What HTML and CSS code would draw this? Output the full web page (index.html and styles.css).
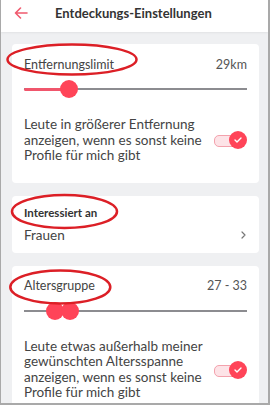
FILE: index.html
```html
<!DOCTYPE html>
<html lang="de">
<head>
<meta charset="utf-8">
<link rel="stylesheet" href="styles.css">
</head>
<body>
<div class="frame">
  <header class="topbar">
    <svg class="back" width="14" height="12" viewBox="0 0 14 12"><path d="M13 6H1.5M6.5 1L1.5 6l5 5" fill="none" stroke="#f05a6e" stroke-width="1.6" stroke-linecap="round" stroke-linejoin="round"/></svg>
    <h1 class="title">Entdeckungs-Einstellungen</h1>
  </header>
  <main class="content">
    <section class="card">
      <div class="row-head">
        <span class="label">Entfernungslimit</span>
        <span class="value">29km</span>
      </div>
      <div class="slider">
        <div class="track"></div>
        <div class="fill" style="width:45px"></div>
        <div class="knob" style="left:36px"></div>
      </div>
      <div class="toggle-row">
        <p class="desc">Leute in größerer Entfernung<br>anzeigen, wenn es sonst keine<br>Profile für mich gibt</p>
        <div class="toggle"><span class="tknob"><svg width="8" height="6" viewBox="0 0 8 6"><path d="M1 3l2 2 4-4" fill="none" stroke="#fff" stroke-width="1.4" stroke-linecap="round" stroke-linejoin="round"/></svg></span></div>
      </div>
    </section>
    <section class="card card-small">
      <div class="sub">Interessiert an</div>
      <div class="nav-row">
        <span class="navtext">Frauen</span>
        <svg width="5" height="8" viewBox="0 0 5 8"><path d="M1 1l3 3-3 3" fill="none" stroke="#777" stroke-width="1.2" stroke-linecap="round" stroke-linejoin="round"/></svg>
      </div>
    </section>
    <section class="card">
      <div class="row-head">
        <span class="label">Altersgruppe</span>
        <span class="value">27 - 33</span>
      </div>
      <div class="slider">
        <div class="track"></div>
        <div class="knob" style="left:22px"></div>
        <div class="knob" style="left:37px"></div>
      </div>
      <div class="toggle-row">
        <p class="desc">Leute etwas außerhalb meiner<br>gewünschten Altersspanne<br>anzeigen, wenn es sonst keine<br>Profile für mich gibt</p>
        <div class="toggle"><span class="tknob"><svg width="8" height="6" viewBox="0 0 8 6"><path d="M1 3l2 2 4-4" fill="none" stroke="#fff" stroke-width="1.4" stroke-linecap="round" stroke-linejoin="round"/></svg></span></div>
      </div>
    </section>
  </main>
  <svg class="marks" width="270" height="405" viewBox="0 0 270 405">
    <ellipse cx="72" cy="59.5" rx="64.5" ry="15" />
    <ellipse cx="64.5" cy="211.5" rx="52.5" ry="16.5" />
    <ellipse cx="60.3" cy="287" rx="50" ry="16.5" />
  </svg>
</div>
</body>
</html>
```
FILE: styles.css
```css
* { box-sizing: border-box; }
html, body { margin: 0; padding: 0; }
body {
  width: 270px;
  height: 405px;
  overflow: hidden;
  font-family: Lato, "Liberation Sans", sans-serif;
  color: #424242;
}
.frame {
  position: relative;
  width: 270px;
  height: 405px;
  background: #eff0f2;
  border-left: 1px solid #a9a9a9;
  border-right: 2px solid #a9a9a9;
  border-bottom: 2px solid #a9a9a9;
  overflow: hidden;
}
.topbar {
  height: 32px;
  background: #fff;
  display: flex;
  align-items: center;
  padding-left: 13px;
  box-shadow: 0 1px 2px rgba(0,0,0,0.06);
}
.back { flex: none; margin-top: -6px; }
.title {
  margin: -6px 0 0 27px;
  font-size: 13px;
  font-weight: 700;
  color: #333;
  letter-spacing: 0;
}
.content {
  padding: 12px 9px 0 11px;
  display: flex;
  flex-direction: column;
  gap: 13px;
}
.card {
  background: #fff;
  border-radius: 4px;
  padding: 10px 12px 19px 12px;
}
.card-small { padding: 9px 12px 8px 12px; }
.row-head {
  display: flex;
  justify-content: space-between;
  align-items: center;
  height: 20px;
  font-size: 12.5px;
}
.label { color: #444; }
.value { color: #555; }
.slider {
  position: relative;
  height: 18px;
  margin-top: 6px;
}
.track {
  position: absolute;
  left: 0; right: 0;
  top: 8px;
  height: 2px;
  background: #8c8c90;
}
.fill {
  position: absolute;
  left: 0;
  top: 7.5px;
  height: 3px;
  background: #f0566c;
  border-radius: 2px;
}
.knob {
  position: absolute;
  top: 0;
  width: 18px;
  height: 18px;
  border-radius: 50%;
  background: #ff4458;
}
.toggle-row {
  display: flex;
  align-items: center;
  justify-content: space-between;
  margin-top: 19px;
}
.desc {
  margin: 0;
  font-size: 13.5px;
  line-height: 15.5px;
  color: #444;
}
.toggle {
  position: relative;
  width: 33px;
  height: 18px;
  flex: none;
}
.toggle::before {
  content: "";
  position: absolute;
  left: 0;
  top: 4px;
  width: 26px;
  height: 10px;
  border-radius: 5px;
  background: #fde3e7;
  border: 1px solid #f3a2ad;
}
.tknob {
  position: absolute;
  right: 0;
  top: 0;
  width: 18px;
  height: 18px;
  border-radius: 50%;
  background: #ff4458;
  display: flex;
  align-items: center;
  justify-content: center;
}
.sub {
  font-size: 11.5px;
  font-weight: 700;
  line-height: 16px;
  color: #333;
}
.nav-row {
  display: flex;
  align-items: center;
  justify-content: space-between;
  height: 20px;
  margin-top: 4px;
  padding-right: 1px;
}
.navtext { font-size: 13.5px; color: #444; }
.marks {
  position: absolute;
  left: -1px;
  top: 0;
  pointer-events: none;
}
.marks ellipse {
  fill: none;
  stroke: #dc1f26;
  stroke-width: 2.5;
}
```
